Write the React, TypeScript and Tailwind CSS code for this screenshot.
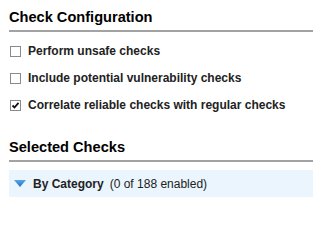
import React, { useState } from 'react';

const options = [
  { id: 'unsafe', label: 'Perform unsafe checks', checked: false },
  { id: 'potential', label: 'Include potential vulnerability checks', checked: false },
  { id: 'correlate', label: 'Correlate reliable checks with regular checks', checked: true },
];

const CheckBox: React.FC<{ checked: boolean; onToggle: () => void }> = ({ checked, onToggle }) => (
  <span
    onClick={onToggle}
    className="w-[11px] h-[11px] border border-[#8a8a8a] bg-white flex items-center justify-center shrink-0 cursor-pointer"
  >
    {checked && (
      <svg width="9" height="9" viewBox="0 0 9 9">
        <path d="M1.5 4.5 L3.5 6.5 L7.5 1.8" stroke="#111" strokeWidth="1.8" fill="none" />
      </svg>
    )}
  </span>
);

const App: React.FC = () => {
  const [checks, setChecks] = useState(options.map(o => o.checked));

  const toggle = (i: number) => {
    const next = [...checks];
    next[i] = !next[i];
    setChecks(next);
  };

  return (
    <div className="w-[313px] h-[202px] bg-white overflow-hidden font-['Liberation_Sans',Arial,sans-serif] text-[#222]">
      {/* Check Configuration */}
      <div className="pl-[9px] pt-[8px]">
        <h2 className="text-[14.6px] font-bold leading-[19px] text-black">Check Configuration</h2>
        <div className="h-[2px] bg-[#a3a3a3] mt-[3px]"></div>
      </div>

      <div className="pl-[10px] pt-[12px] flex flex-col gap-[13px]">
        {options.map((opt, i) => (
          <label key={opt.id} className="flex items-center gap-[7px] h-[14px]">
            <CheckBox checked={checks[i]} onToggle={() => toggle(i)} />
            <span className="text-[12px] font-bold leading-[14px] text-[#222]">{opt.label}</span>
          </label>
        ))}
      </div>

      {/* Selected Checks */}
      <div className="pl-[9px] pt-[26px]">
        <h2 className="text-[14.6px] font-bold leading-[19px] text-black">Selected Checks</h2>
        <div className="h-[2px] bg-[#a3a3a3] mt-[3px]"></div>
      </div>

      <div className="ml-[9px] mt-[8px] h-[27px] bg-[#ebf5fd] flex items-center pl-[5px] gap-[7px]">
        <svg width="12" height="7" viewBox="0 0 12 7">
          <defs>
            <linearGradient id="tri" x1="0" y1="0" x2="0" y2="1">
              <stop offset="0" stopColor="#5aa8e8" />
              <stop offset="1" stopColor="#1f6fc4" />
            </linearGradient>
          </defs>
          <path d="M0 0 H12 L6 7 Z" fill="url(#tri)" />
        </svg>
        <span className="text-[12px] leading-[14px] text-[#222]">
          <span className="font-bold">By Category</span>
          <span className="ml-[6px]">(0 of 188 enabled)</span>
        </span>
      </div>
    </div>
  );
};

export default App;
